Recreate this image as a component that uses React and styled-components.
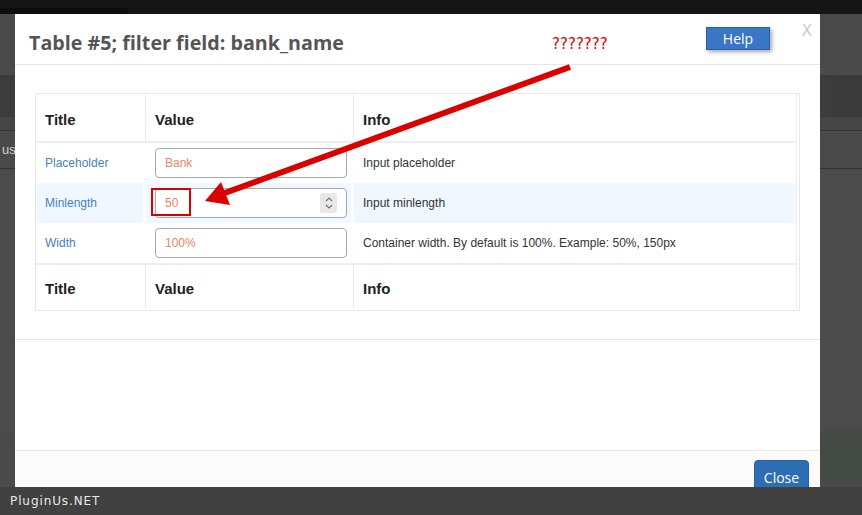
import React from 'react'
import styled, {createGlobalStyle} from 'styled-components'

const GlobalStyle = createGlobalStyle`
    html, body {
        margin: 0;
        padding: 0;
        background: #494949;
        overflow: hidden;
    }
`

const Page = styled.div`
    position: relative;
    width: 862px;
    height: 515px;
    display: flex;
    flex-direction: column;
    background: #4a4a4a;
    font-family: "Liberation Sans", Arial, sans-serif;
`

const TopBar = styled.div`
    height: 14px;
    flex: none;
    background: #161616;
    display: flex;
    align-items: flex-end;
`

const TopTab = styled.div`
    width: 128px;
    height: 6px;
    background: #0e0e0e;
    border-top-right-radius: 4px;
`

const Backdrop = styled.div`
    flex: 1;
    display: flex;
    flex-direction: column;
`

const Band = styled.div`
    height: ${p => p.h}px;
    flex: none;
    background: ${p => p.bg || '#4a4a4a'};
    border-bottom: ${p => p.line ? '1px solid #333' : 'none'};
    display: flex;
    justify-content: space-between;
    align-items: center;
`

const BandText = styled.span`
    color: #cfcfcf;
    font-size: 13px;
    margin-left: 2px;
`

const RightShape = styled.div`
    width: 30px;
    height: 100%;
    background: #3a3a3a;
    border-top-left-radius: 14px;
`

const GreenBlock = styled.div`
    width: 42px;
    height: 100%;
    background: #424a43;
    margin-left: auto;
`

const BottomBar = styled.div`
    height: 28px;
    flex: none;
    background: #414141;
    display: flex;
    align-items: center;
    padding-left: 10px;
    color: #e8e8e8;
    font-family: "DejaVu Sans", sans-serif;
    font-size: 12px;
    letter-spacing: 0.9px;
`

const Modal = styled.div`
    position: absolute;
    left: 15px;
    top: 14px;
    width: 805px;
    height: 473px;
    background: #fff;
    display: flex;
    flex-direction: column;
    overflow: hidden;
`

const ModalHeader = styled.div`
    height: 50px;
    flex: none;
    border-bottom: 1px solid #e5e5e5;
    display: flex;
    align-items: center;
    padding: 0 8px 0 14px;
    position: relative;
`

const ModalTitle = styled.h4`
    margin: 0;
    flex: 1;
    font-family: "Open Sans", sans-serif;
    font-weight: 700;
    font-size: 19.7px;
    color: #555;
    padding-top: 6px;
`

const HelpButton = styled.button`
    width: 64px;
    height: 23px;
    margin-top: -2px;
    margin-right: 42px;
    background: #3a76c6;
    border: 1px solid #2c5fa6;
    box-shadow: 2px 2px 4px rgba(0, 0, 0, 0.35);
    color: #fff;
    font-family: "Open Sans", sans-serif;
    font-size: 14px;
    padding: 0;
`

const CloseX = styled.span`
    position: absolute;
    right: 8px;
    top: 8px;
    color: #cacaca;
    font-family: "DejaVu Sans", sans-serif;
    font-size: 15px;
`

const ModalBody = styled.div`
    height: 275px;
    flex: none;
    border-bottom: 1px solid #e5e5e5;
    padding: 28px 0 0 20px;
    box-sizing: border-box;
`

const ModalSpacer = styled.div`
    flex: 1;
    border-bottom: 1px solid #e5e5e5;
`

const ModalFooter = styled.div`
    height: 36px;
    flex: none;
    box-sizing: border-box;
    background: #fbfbfb;
    display: flex;
    justify-content: flex-end;
    align-items: flex-start;
    padding: 9px 11px 0 0;
`

const CloseButton = styled.button`
    width: 55px;
    height: 34px;
    flex: none;
    background: #2d6db3;
    border: 1px solid #28619f;
    border-radius: 4px;
    color: #fff;
    font-family: "Open Sans", sans-serif;
    font-size: 14px;
    padding: 0;
`

const TableFrame = styled.div`
    width: 765px;
    box-sizing: border-box;
    border: 1px solid #e8e8e8;
    padding: 0 2px 1px 0;
`

const Table = styled.table`
    width: 100%;
    table-layout: fixed;
    border-collapse: separate;
    border-spacing: 0;
    border-right: 1px solid #ececec;
`

const HeadCell = styled.th`
    width: ${p => p.w ? `${p.w}px` : 'auto'};
    height: ${p => p.foot ? 46 : 49}px;
    box-sizing: border-box;
    text-align: left;
    padding: ${p => p.foot ? '2px' : '3px'} 9px 0;
    font-size: 15px;
    font-weight: 700;
    color: #222;
    border-right: ${p => p.last ? 'none' : '1px solid #ececec'};
    border-bottom: ${p => p.foot ? 'none' : '2px solid #eeeeee'};
    border-top: ${p => p.foot ? '2px solid #eeeeee' : 'none'};
`

const Row = styled.tr`
    background: ${p => p.active ? '#f0f7fe' : '#fff'};
`

const Cell = styled.td`
    height: 40px;
    box-sizing: border-box;
    padding: 0 9px;
    font-size: 12px;
    color: #333;
    border-right: ${p => p.last ? 'none' : '3px solid #fff'};
`

const TitleLink = styled.a`
    color: #4383c0;
    text-decoration: none;
    font-size: 12px;
`

const InputBox = styled.div`
    width: 192px;
    height: 30px;
    box-sizing: border-box;
    border: 1px solid #a8a8a8;
    border-radius: 4px;
    background: #fff;
    display: flex;
    align-items: center;
    justify-content: space-between;
    padding: 0 9px 0 9px;
    color: #e8855c;
    font-size: 12px;
`

const Spinner = styled.span`
    width: 17px;
    height: 20px;
    background: #e8e8e8;
    border-radius: 2px;
    display: flex;
    align-items: center;
    justify-content: center;
`

const Annotation = styled.span`
    position: absolute;
    left: 552px;
    top: 35px;
    color: #e00000;
    font-family: "DejaVu Sans", sans-serif;
    font-size: 15px;
`

const Highlight = styled.div`
    position: absolute;
    left: 151px;
    top: 188px;
    width: 40px;
    height: 28px;
    box-sizing: border-box;
    border: 2px solid #d80000;
`

const ArrowLayer = styled.svg`
    position: absolute;
    left: 0;
    top: 0;
    pointer-events: none;
`

const rows = [
    {title: 'Placeholder', value: 'Bank', info: 'Input placeholder'},
    {title: 'Minlength', value: '50', info: 'Input minlength', number: true},
    {title: 'Width', value: '100%', info: 'Container width. By default is 100%. Example: 50%, 150px'},
]

const cols = [
    {label: 'Title', w: 110},
    {label: 'Value', w: 208},
    {label: 'Info'},
]

const SpinnerIcon = () => (
    <svg width="10" height="16" viewBox="0 0 10 16">
        <path d="M2 6 L5 3 L8 6" fill="none" stroke="#777" strokeWidth="1.2" />
        <path d="M2 10 L5 13 L8 10" fill="none" stroke="#777" strokeWidth="1.2" />
    </svg>
)

const HeadRow = ({foot}) => (
    <tr>
        {cols.map((c, i) => (
            <HeadCell key={c.label} w={c.w} foot={foot} last={i === cols.length - 1}>{c.label}</HeadCell>
        ))}
    </tr>
)

const App = () => {
    return (
        <Page>
            <GlobalStyle />
            <TopBar><TopTab /></TopBar>
            <Backdrop>
                <Band h={61} />
                <Band h={42} bg="#3c3c3c"><span /><RightShape /></Band>
                <Band h={13} bg="#464646" line />
                <Band h={37} line><BandText>us</BandText></Band>
                <Band h={262} bg="#4b4b4b" />
                <Band h={50} bg="#4a4a4a"><GreenBlock /></Band>
            </Backdrop>
            <BottomBar>PluginUs.NET</BottomBar>

            <Modal>
                <ModalHeader>
                    <ModalTitle>Table #5; filter field: bank_name</ModalTitle>
                    <HelpButton>Help</HelpButton>
                    <CloseX>X</CloseX>
                </ModalHeader>
                <ModalBody>
                    <TableFrame>
                        <Table>
                            <thead><HeadRow /></thead>
                            <tbody>
                                {rows.map((r, i) => (
                                    <Row key={r.title} active={i === 1}>
                                        <Cell><TitleLink>{r.title}</TitleLink></Cell>
                                        <Cell>
                                            <InputBox>
                                                {r.value}
                                                {r.number && <Spinner><SpinnerIcon /></Spinner>}
                                            </InputBox>
                                        </Cell>
                                        <Cell last>{r.info}</Cell>
                                    </Row>
                                ))}
                            </tbody>
                            <tfoot><HeadRow foot /></tfoot>
                        </Table>
                    </TableFrame>
                </ModalBody>
                <ModalSpacer />
                <ModalFooter>
                    <CloseButton>Close</CloseButton>
                </ModalFooter>
            </Modal>

            <Annotation>???????</Annotation>
            <Highlight />
            <ArrowLayer width="862" height="515" viewBox="0 0 862 515">
                <line x1="570" y1="67" x2="222" y2="194" stroke="#d90000" strokeWidth="6" />
                <polygon points="205,201 230,205 221,182" fill="#d90000" />
            </ArrowLayer>
        </Page>
    )
}

export default App
